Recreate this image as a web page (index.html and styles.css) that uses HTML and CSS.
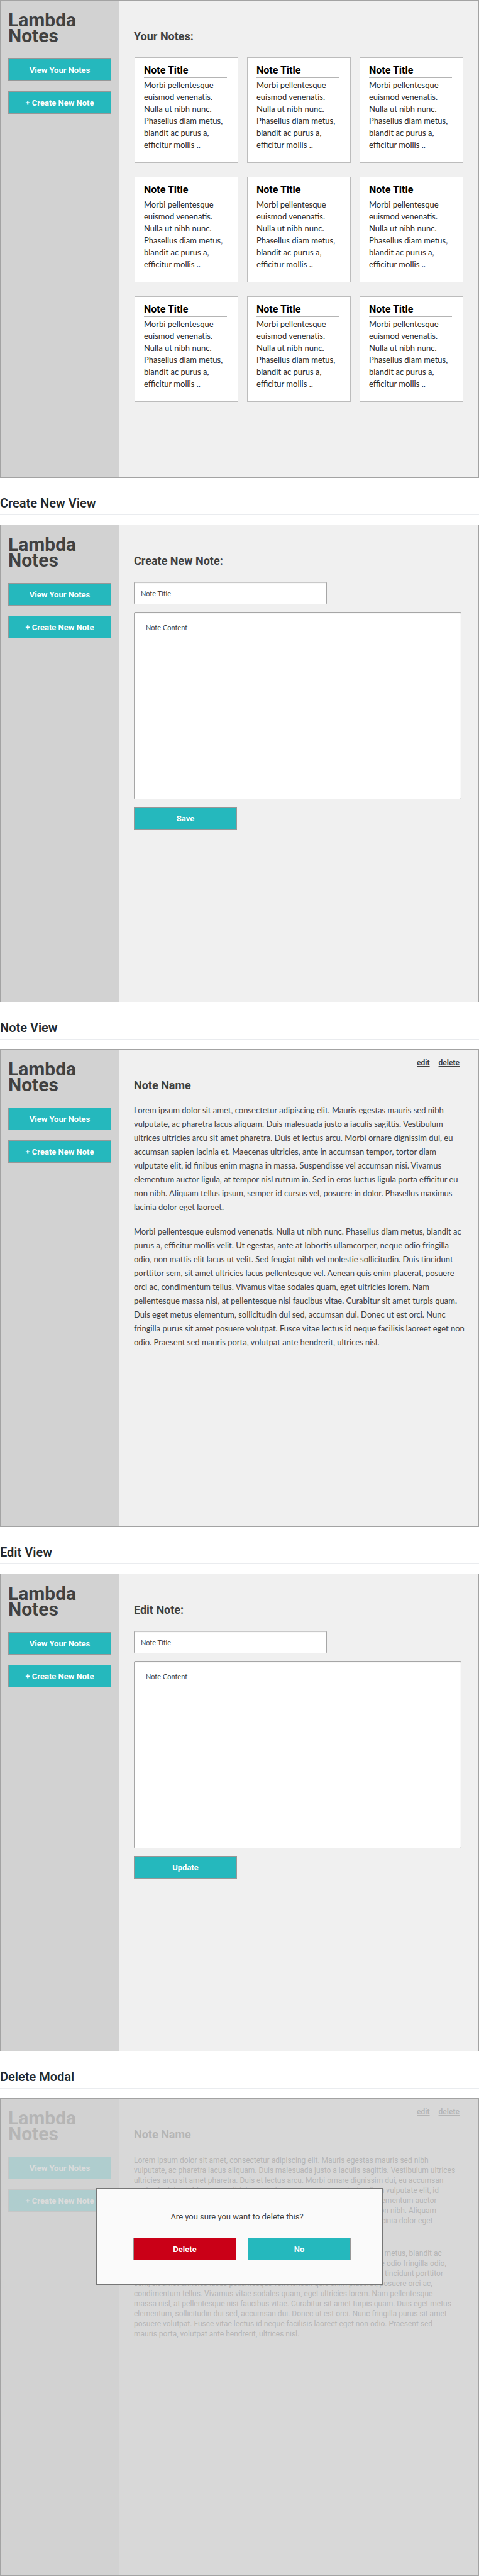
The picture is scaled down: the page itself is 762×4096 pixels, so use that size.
FILE: index.html
```
<!DOCTYPE html>
<html lang="en">
<head>
<meta charset="utf-8">
<meta name="viewport" content="width=device-width, initial-scale=1">
<title>Lambda Notes</title>
<link rel="stylesheet" href="styles.css">
</head>
<body>

<section class="frame">
  <aside class="sidebar">
    <h1 class="logo">Lambda<br>Notes</h1>
    <nav class="menu"><button class="btn">View Your Notes</button><button class="btn">+ Create New Note</button></nav>
  </aside>
  <main class="main">
    <div class="toolbar"></div>
    <h3 class="title">Your Notes:</h3>
    <div class="cards" id="cards">
      <article class="card"><h4 class="card-title">Note Title</h4><p class="card-text">Morbi pellentesque<br>euismod venenatis.<br>Nulla ut nibh nunc.<br>Phasellus diam metus,<br>blandit ac purus a,<br>efficitur mollis ..</p></article>
      <article class="card"><h4 class="card-title">Note Title</h4><p class="card-text">Morbi pellentesque<br>euismod venenatis.<br>Nulla ut nibh nunc.<br>Phasellus diam metus,<br>blandit ac purus a,<br>efficitur mollis ..</p></article>
      <article class="card"><h4 class="card-title">Note Title</h4><p class="card-text">Morbi pellentesque<br>euismod venenatis.<br>Nulla ut nibh nunc.<br>Phasellus diam metus,<br>blandit ac purus a,<br>efficitur mollis ..</p></article>
      <article class="card"><h4 class="card-title">Note Title</h4><p class="card-text">Morbi pellentesque<br>euismod venenatis.<br>Nulla ut nibh nunc.<br>Phasellus diam metus,<br>blandit ac purus a,<br>efficitur mollis ..</p></article>
      <article class="card"><h4 class="card-title">Note Title</h4><p class="card-text">Morbi pellentesque<br>euismod venenatis.<br>Nulla ut nibh nunc.<br>Phasellus diam metus,<br>blandit ac purus a,<br>efficitur mollis ..</p></article>
      <article class="card"><h4 class="card-title">Note Title</h4><p class="card-text">Morbi pellentesque<br>euismod venenatis.<br>Nulla ut nibh nunc.<br>Phasellus diam metus,<br>blandit ac purus a,<br>efficitur mollis ..</p></article>
      <article class="card"><h4 class="card-title">Note Title</h4><p class="card-text">Morbi pellentesque<br>euismod venenatis.<br>Nulla ut nibh nunc.<br>Phasellus diam metus,<br>blandit ac purus a,<br>efficitur mollis ..</p></article>
      <article class="card"><h4 class="card-title">Note Title</h4><p class="card-text">Morbi pellentesque<br>euismod venenatis.<br>Nulla ut nibh nunc.<br>Phasellus diam metus,<br>blandit ac purus a,<br>efficitur mollis ..</p></article>
      <article class="card"><h4 class="card-title">Note Title</h4><p class="card-text">Morbi pellentesque<br>euismod venenatis.<br>Nulla ut nibh nunc.<br>Phasellus diam metus,<br>blandit ac purus a,<br>efficitur mollis ..</p></article>
    </div>
  </main>
</section>

<h2 class="heading">Create New View</h2>
<section class="frame">
  <aside class="sidebar">
    <div class="logo">Lambda<br>Notes</div>
    <nav class="menu"><button class="btn">View Your Notes</button><button class="btn">+ Create New Note</button></nav>
  </aside>
  <main class="main">
    <div class="toolbar"></div>
    <h3 class="title">Create New Note:</h3>
    <form class="form">
      <input class="field" type="text" aria-label="Note Title" placeholder="Note Title">
      <textarea class="field area" aria-label="Note Content" placeholder="Note Content"></textarea>
      <button class="btn" type="button">Save</button>
    </form>
  </main>
</section>

<h2 class="heading">Note View</h2>
<section class="frame">
  <aside class="sidebar">
    <div class="logo">Lambda<br>Notes</div>
    <nav class="menu"><button class="btn">View Your Notes</button><button class="btn">+ Create New Note</button></nav>
  </aside>
  <main class="main">
    <div class="toolbar"><a class="action" href="#edit">edit</a><a class="action" href="#delete">delete</a></div>
    <h3 class="title">Note Name</h3>
    <div class="note">
      <p class="para">Lorem ipsum dolor sit amet, consectetur adipiscing elit. Mauris egestas mauris sed nibh<br>vulputate, ac pharetra lacus aliquam. Duis malesuada justo a iaculis sagittis. Vestibulum<br>ultrices ultricies arcu sit amet pharetra. Duis et lectus arcu. Morbi ornare dignissim dui, eu<br>accumsan sapien lacinia et. Maecenas ultricies, ante in accumsan tempor, tortor diam<br>vulputate elit, id finibus enim magna in massa. Suspendisse vel accumsan nisi. Vivamus<br>elementum auctor ligula, at tempor nisl rutrum in. Sed in eros luctus ligula porta efficitur eu<br>non nibh. Aliquam tellus ipsum, semper id cursus vel, posuere in dolor. Phasellus maximus<br>lacinia dolor eget laoreet.</p>
      <p class="para">Morbi pellentesque euismod venenatis. Nulla ut nibh nunc. Phasellus diam metus, blandit ac<br>purus a, efficitur mollis velit. Ut egestas, ante at lobortis ullamcorper, neque odio fringilla<br>odio, non mattis elit lacus ut velit. Sed feugiat nibh vel molestie sollicitudin. Duis tincidunt<br>porttitor sem, sit amet ultricies lacus pellentesque vel. Aenean quis enim placerat, posuere<br>orci ac, condimentum tellus. Vivamus vitae sodales quam, eget ultricies lorem. Nam<br>pellentesque massa nisl, at pellentesque nisi faucibus vitae. Curabitur sit amet turpis quam.<br>Duis eget metus elementum, sollicitudin dui sed, accumsan dui. Donec ut est orci. Nunc<br>fringilla purus sit amet posuere volutpat. Fusce vitae lectus id neque facilisis laoreet eget non<br>odio. Praesent sed mauris porta, volutpat ante hendrerit, ultrices nisl.</p>
    </div>
  </main>
</section>

<h2 class="heading">Edit View</h2>
<section class="frame">
  <aside class="sidebar">
    <div class="logo">Lambda<br>Notes</div>
    <nav class="menu"><button class="btn">View Your Notes</button><button class="btn">+ Create New Note</button></nav>
  </aside>
  <main class="main">
    <div class="toolbar"></div>
    <h3 class="title">Edit Note:</h3>
    <form class="form">
      <input class="field" type="text" aria-label="Note Title" placeholder="Note Title">
      <textarea class="field area" aria-label="Note Content" placeholder="Note Content"></textarea>
      <button class="btn" type="button">Update</button>
    </form>
  </main>
</section>

<h2 class="heading">Delete Modal</h2>
<section class="frame">
  <aside class="sidebar">
    <div class="logo">Lambda<br>Notes</div>
    <nav class="menu"><button class="btn">View Your Notes</button><button class="btn">+ Create New Note</button></nav>
  </aside>
  <main class="main">
    <div class="toolbar"><a class="action" href="#edit">edit</a><a class="action" href="#delete">delete</a></div>
    <h3 class="title">Note Name</h3>
    <div class="note note-compact">
      <p class="para">Lorem ipsum dolor sit amet, consectetur adipiscing elit. Mauris egestas mauris sed nibh<br>vulputate, ac pharetra lacus aliquam. Duis malesuada justo a iaculis sagittis. Vestibulum ultrices<br>ultricies arcu sit amet pharetra. Duis et lectus arcu. Morbi ornare dignissim dui, eu accumsan<br>sapien lacinia et. Maecenas ultricies, ante in accumsan tempor, tortor diam vulputate elit, id<br>finibus enim magna in massa. Suspendisse vel accumsan nisi. Vivamus elementum auctor<br>ligula, at tempor nisl rutrum in. Sed in eros luctus ligula porta efficitur eu non nibh. Aliquam<br>tellus ipsum, semper id cursus vel, posuere in dolor. Phasellus maximus lacinia dolor eget<br>laoreet.</p>
      <p class="para">Morbi pellentesque euismod venenatis. Nulla ut nibh nunc. Phasellus diam metus, blandit ac<br>purus a, efficitur mollis velit. Ut egestas, ante at lobortis ullamcorper, neque odio fringilla odio,<br>non mattis elit lacus ut velit. Sed feugiat nibh vel molestie sollicitudin. Duis tincidunt porttitor<br>sem, sit amet ultricies lacus pellentesque vel. Aenean quis enim placerat, posuere orci ac,<br>condimentum tellus. Vivamus vitae sodales quam, eget ultricies lorem. Nam pellentesque<br>massa nisl, at pellentesque nisi faucibus vitae. Curabitur sit amet turpis quam. Duis eget metus<br>elementum, sollicitudin dui sed, accumsan dui. Donec ut est orci. Nunc fringilla purus sit amet<br>posuere volutpat. Fusce vitae lectus id neque facilisis laoreet eget non odio. Praesent sed<br>mauris porta, volutpat ante hendrerit, ultrices nisl.</p>
    </div>
  </main>
  <div class="overlay">
    <div class="modal" role="dialog" aria-labelledby="ask">
      <p class="question" id="ask">Are you sure you want to delete this?</p>
      <div class="choices"><button class="btn btn-danger">Delete</button><button class="btn">No</button></div>
    </div>
  </div>
</section>

</body>
</html>
```
FILE: styles.css
```
* { box-sizing: border-box; }

body {
  margin: 0;
  background: #fff;
  color: #414141;
  font-family: Roboto, "Liberation Sans", sans-serif;
}

h1, h2, h3, h4, p { margin: 0; }

.heading {
  height: 59px;
  margin-bottom: 15px;
  padding-top: 28px;
  border-bottom: 1px solid #eaecef;
  color: #24292e;
  font-size: 20px;
  font-weight: 600;
  line-height: 24px;
}

.frame {
  position: relative;
  display: flex;
  min-height: 760px;
  border: 1px solid #a3a3a3;
  background: #f0f0f0;
}

.sidebar {
  flex: 0 0 189px;
  padding: 18px 12px;
  border-right: 1px solid #adadad;
  background: #d2d2d2;
}

.logo {
  margin-bottom: 24px;
  font-size: 30px;
  font-weight: 700;
  line-height: 25px;
}

.menu {
  display: flex;
  flex-direction: column;
  gap: 16px;
}

.btn {
  width: 164px;
  height: 36px;
  padding: 0;
  border: 1px solid #979797;
  background: #25b8bd;
  color: #fff;
  font-family: inherit;
  font-size: 13px;
  font-weight: 700;
}

.btn-danger { background: #ca0017; }

.main {
  flex: 1;
  min-width: 0;
  padding: 0 27px 24px 23px;
}

.toolbar {
  display: flex;
  justify-content: flex-end;
  gap: 14px;
  height: 45px;
  padding: 13px 3px 0 0;
}

.action {
  color: inherit;
  font-size: 12px;
  font-weight: 700;
  line-height: 16px;
}

.title {
  margin-bottom: 21px;
  font-size: 18px;
  font-weight: 700;
  line-height: 24px;
}

.cards {
  display: grid;
  grid-template-columns: repeat(3, 1fr);
  gap: 22px 14px;
  margin: 0 -3px 0 1px;
}

.card {
  height: 168px;
  padding: 11px 17px 0 14px;
  border: 1px solid #bcbcbc;
  background: #fff;
}

.card-title {
  padding-bottom: 2px;
  border-bottom: 1px solid #b4b4b4;
  color: #000;
  font-size: 16px;
  font-weight: 700;
  line-height: 18px;
}

.card-text {
  padding-top: 2px;
  color: #2b2b2b;
  font-family: Lato, sans-serif;
  font-size: 13px;
  line-height: 19px;
  white-space: nowrap;
}

.form {
  display: flex;
  flex-direction: column;
  align-items: flex-start;
  gap: 12px;
}

.field {
  width: 59%;
  height: 36px;
  padding: 0 10px;
  border: 1px solid #a6a6a6;
  border-radius: 2px;
  background: #fff;
  box-shadow: inset 0 1px 1px #c4c4c4;
  color: #414141;
  font-family: Lato, sans-serif;
  font-size: 11px;
}

.field::placeholder { color: #414141; opacity: 1; }

.area {
  width: 100%;
  height: 298px;
  padding: 16px 18px;
  line-height: 16px;
  resize: none;
}

.note {
  margin-top: -5px;
  font-family: Lato, sans-serif;
  font-size: 13px;
  line-height: 22px;
  white-space: nowrap;
}

.para + .para { margin-top: 17px; }

.note-compact {
  margin-top: 0;
  font-family: Roboto, sans-serif;
  font-size: 12px;
  line-height: 16px;
}

.note-compact .para + .para { margin-top: 20px; }

.overlay {
  position: absolute;
  inset: 0;
  padding-top: 142px;
  background: rgba(210, 210, 210, 0.8);
}

.modal {
  width: 60%;
  height: 154px;
  margin: 0 auto;
  padding: 35px 50px 0 58px;
  border: 1px solid #767676;
  background: #fafafa;
}

.question {
  margin-bottom: 23px;
  padding-right: 16px;
  font-size: 13px;
  line-height: 20px;
  text-align: center;
}

.choices {
  display: flex;
  justify-content: space-between;
}
```
